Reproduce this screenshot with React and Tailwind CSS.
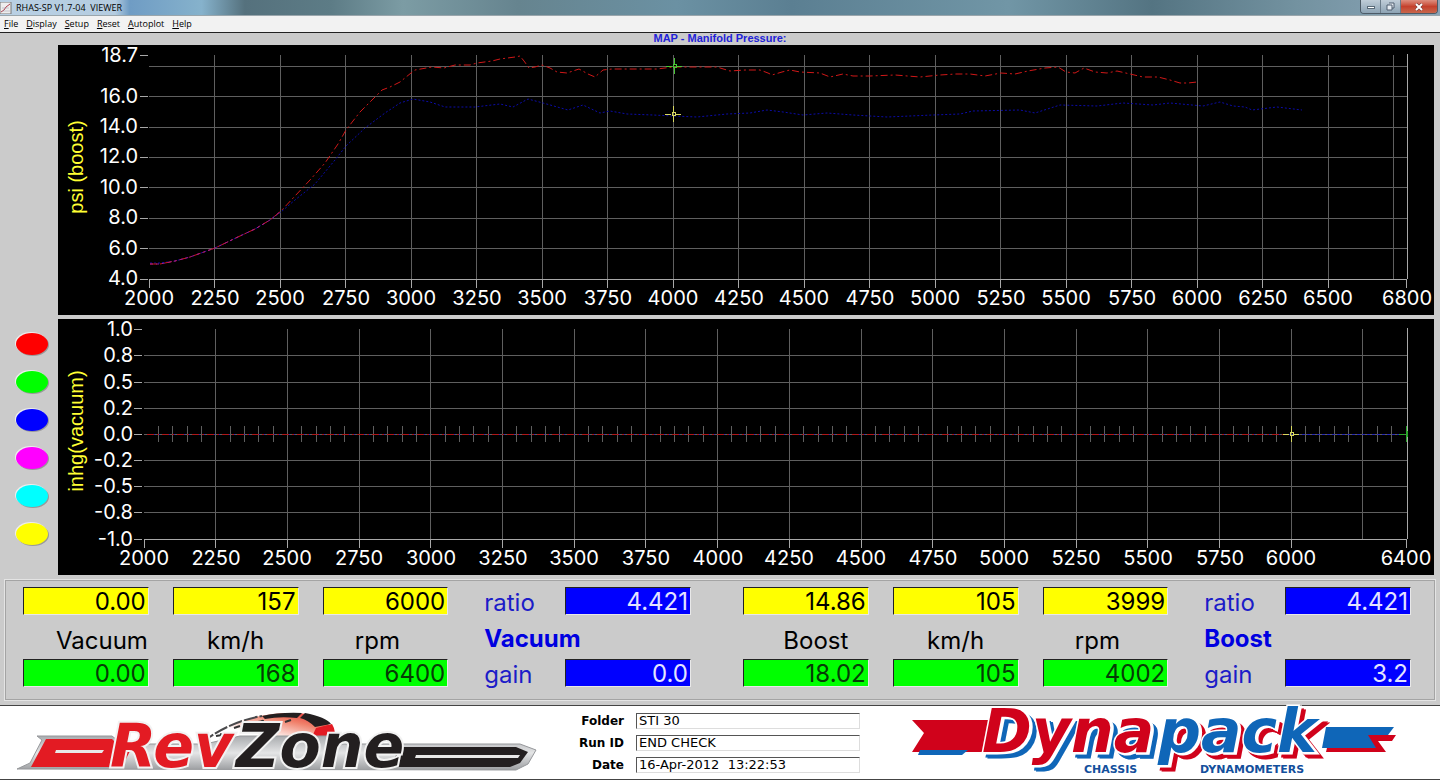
import React, { useState } from "react";

const MENU = ["File", "Display", "Setup", "Reset", "Autoplot", "Help"];

const RUNS = [
  { name: "red", color: "bg-[#ff0000]" },
  { name: "green", color: "bg-[#00ff00]" },
  { name: "blue", color: "bg-[#0000ff]" },
  { name: "magenta", color: "bg-[#ff00ff]" },
  { name: "cyan", color: "bg-[#00ffff]" },
  { name: "yellow", color: "bg-[#ffff00]" },
];

const BOOST_RED =
  "150,264 160,264 175,261 190,257 215,248 240,236 255,229 270,220 281,211 295,196 310,180 325,163 338,144 346,130 360,112 375,97 382,90 390,87 400,82 411,73 415,70 432,67 444,68 455,65 470,65 477,63 492,61 500,59 515,57 520,56 524,61 529,68 535,67 542,65 550,68 557,72 567,73 579,69 588,74 595,77 603,70 612,69 622,69 640,69 657,69 665,68 674,67 700,67 717,67 730,71 745,70 760,70 768,73 772,75 782,72 790,70 800,72 820,73 830,77 843,74 853,76 870,76 895,75 920,77 940,75 956,74 970,74 985,76 1001,73 1015,74 1028,71 1045,68 1058,67 1066,72 1075,73 1084,68 1095,72 1107,73 1117,71 1130,74 1143,77 1158,77 1170,80 1180,83 1188,83 1197,82";

const BOOST_BLUE =
  "150,263 160,263 175,261 190,257 215,248 240,236 255,229 270,220 281,212 295,200 315,184 335,160 346,146 365,128 385,113 400,103 413,99 430,102 445,107 475,107 500,104 513,107 528,99 543,103 568,110 583,105 600,113 610,111 627,114 653,115 673,116 697,117 727,114 750,113 767,110 783,112 803,115 827,113 853,115 887,117 933,115 960,114 973,111 1020,110 1035,113 1060,105 1097,106 1123,103 1153,105 1170,103 1203,106 1220,102 1233,106 1245,107 1252,110 1277,107 1302,110";

const boostY = (v) => 279 - (v - 4) * 15.19;
const boostX = (rpm) => 149 + (rpm - 2000) * 0.262;
const vacX = (rpm) => 144 + (rpm - 2000) * 0.28682;

const range = (from, to, step) => {
  const out = [];
  for (let v = from; v <= to; v += step) out.push(v);
  return out;
};

const Cursor = ({ x, y, color }) => (
  <g stroke={color} fill="none" shapeRendering="crispEdges">
    <path d={`M${x - 8} ${y}H${x - 2}M${x + 2} ${y}H${x + 8}`} />
    <path d={`M${x} ${y - 8}V${y - 2}M${x} ${y + 2}V${y + 8}`} />
    <rect x={x - 1} y={y - 2} width="3" height="3" />
  </g>
);

const BoostChart = () => {
  const yLabels = [4, 6, 8, 10, 12, 14, 16, 18.7];
  const xLabels = [...range(2000, 6500, 250), 6800];
  return (
    <svg
      viewBox="58 45 1376 270"
      className="block h-auto w-full overflow-visible bg-black font-['Inter',sans-serif] text-[20px]"
      role="img"
      aria-label="Boost against rpm"
    >
      <g stroke="#5f5f5f" shapeRendering="crispEdges">
        {range(6, 18, 2).map((v) => (
          <path key={v} d={`M149 ${boostY(v)}H1407`} />
        ))}
        {range(2250, 6750, 250).map((v) => (
          <path key={v} d={`M${boostX(v)} 55V279`} />
        ))}
      </g>
      <g stroke="#a8a8a8" fill="none" shapeRendering="crispEdges">
        <path d="M149 279H1407M1407 54V279" />
        {xLabels.map((v) => (
          <path key={v} d={`M${boostX(v)} 279v9`} />
        ))}
        {yLabels.map((v) => (
          <path key={v} d={`M140 ${boostY(v)}h8`} />
        ))}
      </g>
      <polyline points={BOOST_BLUE} fill="none" stroke="#0c0ca8" strokeDasharray="2 2" />
      <polyline points={BOOST_RED} fill="none" stroke="#d01818" strokeDasharray="7 3 2 3" />
      <polyline
        points="150,264 160,264 175,261 190,257 215,248 240,236 255,229 270,220 281,211"
        fill="none"
        stroke="#a01890"
        strokeDasharray="3 3"
      />
      <Cursor x={674} y={66} color="#46c832" />
      <Cursor x={673} y={114} color="#d8d860" />
      <g fill="#fff" textAnchor="end">
        {yLabels.map((v) => (
          <text key={v} x="138" y={Math.round(boostY(v)) + 6}>
            {v.toFixed(1)}
          </text>
        ))}
      </g>
      <g fill="#fff" textAnchor="middle">
        {xLabels.map((v) => (
          <text key={v} x={Math.round(boostX(v))} y="305">
            {v}
          </text>
        ))}
      </g>
      <text
        transform="translate(83 167) rotate(-90)"
        textAnchor="middle"
        fill="#ffff33"
        className="font-['Liberation_Sans',sans-serif]"
      >
        psi (boost)
      </text>
    </svg>
  );
};

const VacuumChart = () => {
  const rows = [
    { y: 329, label: "1.0" },
    { y: 355, label: "0.8" },
    { y: 382, label: "0.5" },
    { y: 408, label: "0.2" },
    { y: 434, label: "0.0" },
    { y: 460, label: "-0.2" },
    { y: 486, label: "-0.5" },
    { y: 512, label: "-0.8" },
    { y: 539, label: "-1.0" },
  ];
  const xLabels = [...range(2000, 6000, 250), 6400];
  return (
    <svg
      viewBox="58 319 1376 256"
      className="block h-auto w-full overflow-visible bg-black font-['Inter',sans-serif] text-[20px]"
      role="img"
      aria-label="Vacuum against rpm"
    >
      <g stroke="#5f5f5f" shapeRendering="crispEdges">
        {rows.slice(1, 8).map((r) => (
          <path key={r.label} d={`M144 ${r.y}H1407`} />
        ))}
        {range(2250, 6250, 250).map((v) => (
          <path key={v} d={`M${vacX(v)} 329V539`} />
        ))}
        {range(2050, 6350, 50).map((v) => (
          <path key={v} d={`M${vacX(v)} 426V442`} />
        ))}
      </g>
      <g stroke="#a8a8a8" fill="none" shapeRendering="crispEdges">
        <path d="M144 539H1407M1407 328V539" />
        {xLabels.map((v) => (
          <path key={v} d={`M${vacX(v)} 539v9`} />
        ))}
        {rows.map((r) => (
          <path key={r.label} d={`M134 ${r.y}h8`} />
        ))}
      </g>
      <g fill="none" shapeRendering="crispEdges">
        <path d="M147 434H1400" stroke="#2828b8" strokeDasharray="3 2" />
        <path d="M147 434H1284" stroke="#b01818" strokeDasharray="7 3 2 3" />
      </g>
      <Cursor x={1291} y={434} color="#d8d860" />
      <path
        d="M1399 434H1405M1406 426V442M1407 431V437"
        stroke="#28a828"
        shapeRendering="crispEdges"
      />
      <g fill="#fff" textAnchor="end">
        {rows.map((r) => (
          <text key={r.label} x="133" y={r.y + 7}>
            {r.label}
          </text>
        ))}
      </g>
      <g fill="#fff" textAnchor="middle">
        {xLabels.map((v) => (
          <text key={v} x={Math.round(vacX(v))} y="565">
            {v}
          </text>
        ))}
      </g>
      <text
        transform="translate(83 431) rotate(-90)"
        textAnchor="middle"
        fill="#ffff33"
        className="font-['Liberation_Sans',sans-serif]"
      >
        inhg(vacuum)
      </text>
    </svg>
  );
};

const Readout = ({ label, value, tone }) => (
  <input
    readOnly
    aria-label={label}
    value={value}
    className={`h-7 w-full min-w-0 border border-t-[#222] border-r-[#e8e8e8] border-b-[#e8e8e8] border-l-[#222] pr-[2px] text-right leading-[26px] outline-none ${
      tone === "yellow"
        ? "bg-[#ffff00] text-black"
        : tone === "green"
        ? "bg-[#00ff00] text-[#063c06]"
        : "bg-[#0000ff] text-[#e4e4ff]"
    }`}
  />
);

const ReadoutGroup = ({ name, nameClass, first, second, gain }) => (
  <div className="grid grid-cols-[minmax(0,1fr)_minmax(0,1fr)_minmax(0,1fr)_69px_minmax(0,1fr)] grid-rows-[28px_44px_28px] items-center gap-x-6">
    <Readout label={`${name} cursor 1`} value={first[0]} tone="yellow" />
    <Readout label="km/h cursor 1" value={first[1]} tone="yellow" />
    <Readout label="rpm cursor 1" value={first[2]} tone="yellow" />
    <span className="pt-1 pl-3 text-[#1c1cc8]">ratio</span>
    <Readout label={`${name} ratio`} value="4.421" tone="blue" />

    <span className={`pt-2 text-center ${nameClass}`}>{name}</span>
    <span className="pt-2 text-center">km/h</span>
    <span className="pt-2 pr-4 text-center">rpm</span>
    <span className="col-span-2 pt-1 pl-3 font-bold text-[#0000e0]">{name}</span>

    <Readout label={`${name} cursor 2`} value={second[0]} tone="green" />
    <Readout label="km/h cursor 2" value={second[1]} tone="green" />
    <Readout label="rpm cursor 2" value={second[2]} tone="green" />
    <span className="pt-1 pl-3 text-[#1c1cc8]">gain</span>
    <Readout label={`${name} gain`} value={gain} tone="blue" />
  </div>
);

const RevZoneLogo = () => (
  <svg
    viewBox="0 706 560 73"
    className="block h-auto w-full overflow-visible"
    role="img"
    aria-label="RevZone"
  >
    <defs>
      <linearGradient id="dial" x1="0" y1="1" x2="1" y2="0">
        <stop offset="0.35" stopColor="#fff" />
        <stop offset="0.7" stopColor="#f0806a" />
        <stop offset="1" stopColor="#e31b23" />
      </linearGradient>
      <linearGradient id="plate" x1="0" y1="0" x2="0" y2="1">
        <stop offset="0" stopColor="#a9abae" />
        <stop offset="0.5" stopColor="#e4e5e6" />
        <stop offset="1" stopColor="#9c9ea1" />
      </linearGradient>
    </defs>
    <path d="M202 743C226 722 262 712 296 713C322 714 337 727 334 742Z" fill="url(#dial)" />
    <path
      d="M202 743C216 731 238 720 262 716"
      fill="none"
      stroke="#4a4a4c"
      strokeWidth="2"
      strokeDasharray="14 2"
    />
    <path d="M262 716Q280 712 302 713L297 718Q280 716 265 719Z" fill="#231f20" />
    <path d="M305 713Q326 717 331 724L315 727Q308 720 300 718Z" fill="#231f20" />
    <path d="M316 728L332 724Q337 732 333 740L310 741Z" fill="#e31b23" />
    <path
      d="M216 736l6-1M234 728l6-2M258 722l6-1M285 722l6-2M220 734l3 1M262 720l1 3"
      stroke="#333"
      strokeWidth="2"
    />
    <path
      d="M17 769L30 763L42 740L37 736H112L122 744H205L240 736H341L330 744H520L536 750L528 764L516 770Z"
      fill="url(#plate)"
      stroke="#96989b"
    />
    <path d="M46 739H112L120 747H132L122 767H31Z" fill="#e31b23" />
    <path d="M400 747H516L528 752L520 763L510 767H390Z" fill="#231f20" />
    <path d="M56 750H104L102 753H55ZM416 755H520L518 758H415Z" fill="#e8e8e8" />
    <g
      stroke="#f2f2f2"
      strokeWidth="4"
      paintOrder="stroke"
      className="font-['DejaVu_Sans',sans-serif] text-[60px] font-bold italic"
    >
      <text x="110" y="767" fill="#e31b23">
        Rev
      </text>
      <text x="236" y="767" fill="#231f20">
        Zone
      </text>
    </g>
  </svg>
);

const DynapackLogo = () => (
  <svg
    viewBox="900 706 540 73"
    className="block h-auto w-full overflow-visible"
    role="img"
    aria-label="Dynapack Chassis Dynamometers"
  >
    <path d="M912 720H990L984 752H912L924 733Z" fill="#d0021b" />
    <path d="M920 750h48l-6 5h-44z" fill="#0f66b8" />
    <path d="M1330 735H1396L1392 741H1378L1386 752H1326Z" fill="#d0021b" />
    <path d="M1326 727H1394L1388 735H1368L1376 748H1322Z" fill="#0f66b8" />
    <g className="font-['DejaVu_Sans',sans-serif] text-[60px] font-bold italic">
      <g className="[filter:drop-shadow(2px_1px_0_#fff)_drop-shadow(4px_4px_0_#0f66b8)]">
        <text x="982" y="752" fill="#d0021b" stroke="#fff" strokeWidth="3" paintOrder="stroke">
          Dyna
        </text>
      </g>
      <g className="[filter:drop-shadow(2px_1px_0_#fff)_drop-shadow(4px_4px_0_#d0021b)]">
        <text x="1158" y="752" fill="#0f66b8" stroke="#fff" strokeWidth="3" paintOrder="stroke">
          pack
        </text>
      </g>
    </g>
    <g fill="#134f9c" className="font-['DejaVu_Sans',sans-serif] text-[11px] font-bold">
      <text x="1084" y="773">CHASSIS</text>
      <text x="1200" y="773">DYNAMOMETERS</text>
    </g>
  </svg>
);

const App = () => {
  const [run, setRun] = useState({
    folder: "STI 30",
    id: "END CHECK",
    date: "16-Apr-2012  13:22:53",
  });

  const fields = [
    { key: "folder", label: "Folder" },
    { key: "id", label: "Run ID" },
    { key: "date", label: "Date" },
  ];

  return (
    <div className="flex w-full flex-col bg-[#cbcbcb] font-['Inter',sans-serif] text-black">
      <header className="flex h-4 items-start justify-between border-b border-[#9aa6ac] bg-[linear-gradient(90deg,#b9d0e4_0%,#b4cce0_8%,#6f9cc4_9%,#86b2cc_14%,#55717d_17%,#5d7c86_23%,#7c9ca4_28%,#66848f_36%,#6b91a3_47%,#5b7f92_55%,#7196a6_70%,#547482_80%,#7392a0_90%,#8ba5b8_100%)]">
        <div className="flex h-4 items-center gap-1 font-['Open_Sans',sans-serif] text-[9px]">
          <svg viewBox="0 0 12 12" className="h-3 w-3" aria-hidden="true">
            <rect width="11" height="12" fill="#eee" stroke="#777" />
            <path d="M1 10L4 8L6 5L10 2" fill="none" stroke="#b04050" />
            <path d="M2 9H10M2 6H9" stroke="#99a" strokeWidth=".5" />
          </svg>
          <span className="whitespace-pre">RHAS-SP V1.7-04  VIEWER</span>
        </div>
        <div className="mr-[2px] flex h-[14px] overflow-hidden rounded-b border border-t-0 border-[#4c5a66]">
          <button
            aria-label="Minimize"
            className="flex w-5 items-end justify-center border-r border-[#6b7c8a] bg-gradient-to-b from-[#c0cdd8] to-[#8da3b4] pb-1"
          >
            <span className="h-[3px] w-2 border border-[#5a6a78] bg-white" />
          </button>
          <button
            aria-label="Restore"
            className="flex w-5 items-center justify-center border-r border-[#6b7c8a] bg-gradient-to-b from-[#c0cdd8] to-[#8da3b4]"
          >
            <svg viewBox="0 0 9 9" className="h-[9px] w-[9px]" aria-hidden="true">
              <path d="M3 1H8V6H6M1 3H6V8H1Z" fill="#e8eef4" stroke="#4f5c6e" />
            </svg>
          </button>
          <button
            aria-label="Close"
            className="flex w-9 items-center justify-center bg-gradient-to-b from-[#dd8f80] via-[#c4402c] to-[#c8664c]"
          >
            <svg viewBox="0 0 8 8" className="h-2 w-2" aria-hidden="true">
              <path d="M1 1L7 7M7 1L1 7" stroke="#5e3030" strokeWidth="3" />
              <path d="M1 1L7 7M7 1L1 7" stroke="#fff" strokeWidth="2" />
            </svg>
          </button>
        </div>
      </header>

      <nav className="flex h-[17px] items-center gap-2 border-b border-[#222] bg-[#f2f2f2] px-1 pb-[2px] font-['Open_Sans',sans-serif] text-[9px] leading-none">
        {MENU.map((m) => (
          <button key={m}>
            <span className="underline">{m[0]}</span>
            {m.slice(1)}
          </button>
        ))}
      </nav>

      <h1 className="h-3 text-center font-['Liberation_Sans',sans-serif] text-[11px] leading-[10px] font-bold text-[#2222d8]">
        MAP - Manifold Pressure:
      </h1>

      <main className="flex pr-[6px]">
        <aside className="flex w-[58px] shrink-0 flex-col items-center gap-4 pt-[288px] pl-[6px]">
          {RUNS.map((r) => (
            <button
              key={r.name}
              aria-label={`Select ${r.name} run`}
              className={`h-[22px] w-8 rounded-[50%] shadow-[-1px_-1px_0_#eee,1px_1px_0_#999] ${r.color}`}
            />
          ))}
        </aside>
        <div className="flex min-w-0 flex-1 flex-col gap-1">
          <BoostChart />
          <VacuumChart />
        </div>
      </main>

      <section className="mx-[5px] my-[5px] grid h-[120px] grid-cols-2 gap-x-[52px] border border-[#a4a4a4] pt-[6px] pr-[23px] pl-[17px] text-[24px] leading-none shadow-[0_0_0_1px_#e4e4e4]">
        <ReadoutGroup
          name="Vacuum"
          nameClass="pl-8"
          first={["0.00", "157", "6000"]}
          second={["0.00", "168", "6400"]}
          gain="0.0"
        />
        <ReadoutGroup
          name="Boost"
          nameClass="pl-5"
          first={["14.86", "105", "3999"]}
          second={["18.02", "105", "4002"]}
          gain="3.2"
        />
      </section>

      <footer className="grid grid-cols-[560fr_340fr_540fr] items-center border-y border-[#444] bg-white">
        <RevZoneLogo />
        <form className="flex flex-col gap-[6px] pr-10 font-['DejaVu_Sans',sans-serif]">
          {fields.map((f) => (
            <div key={f.key} className="flex items-center gap-3">
              <label htmlFor={f.key} className="w-16 text-right text-[12px] leading-4 font-bold">
                {f.label}
              </label>
              <input
                id={f.key}
                value={run[f.key]}
                onChange={(e) => setRun({ ...run, [f.key]: e.target.value })}
                className="h-4 min-w-0 flex-1 border border-[#ddd] border-t-[#555] border-l-[#555] px-[2px] text-[13px] leading-[14px] outline-none"
              />
            </div>
          ))}
        </form>
        <DynapackLogo />
      </footer>
    </div>
  );
};

export default App;
